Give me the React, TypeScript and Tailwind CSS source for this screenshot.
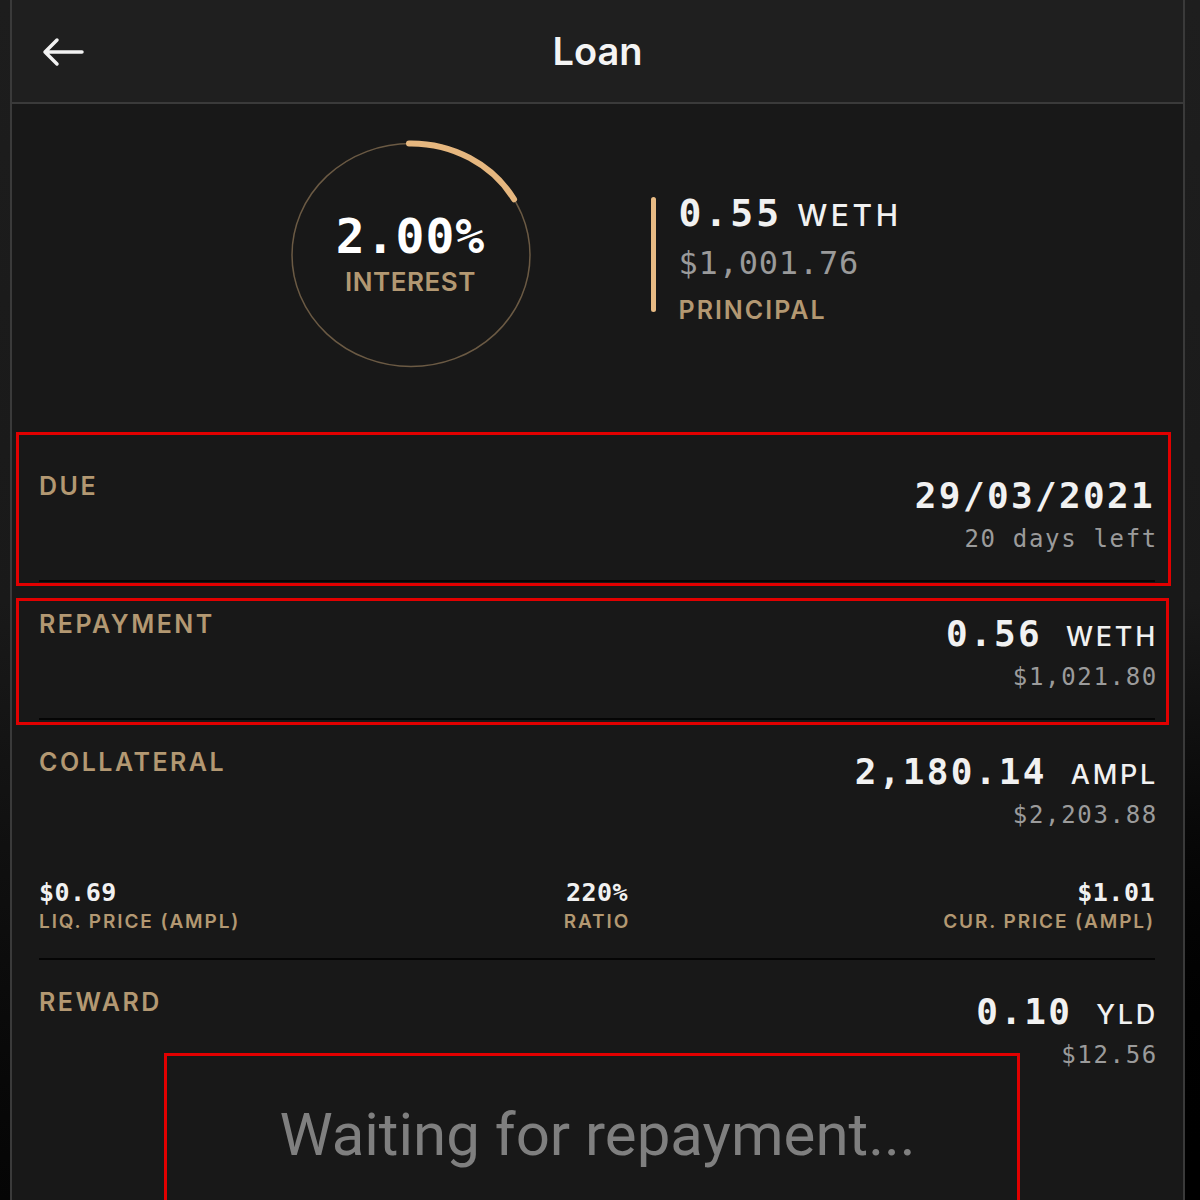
const mono = "font-['DejaVu_Sans_Mono',monospace]";
const sans = "font-['Inter','Noto_Sans',sans-serif]";

const label = `${sans} text-[25px] leading-none font-semibold tracking-[0.1em] text-[#b39872]`;

type Row = {
  title: string;
  value: string;
  unit?: string;
  sub: string;
};

const rows: Row[] = [
  { title: "DUE", value: "29/03/2021", sub: "20 days left" },
  { title: "REPAYMENT", value: "0.56", unit: "WETH", sub: "$1,021.80" },
];

const stats = [
  { value: "$0.69", label: "LIQ. PRICE (AMPL)", align: "items-start" },
  { value: "220%", label: "RATIO", align: "items-center" },
  { value: "$1.01", label: "CUR. PRICE (AMPL)", align: "items-end" },
];

function ValueBlock({ value, unit, sub }: { value: string; unit?: string; sub: string }) {
  return (
    <div className="mt-[4px] flex flex-col items-end">
      <div className="flex items-baseline">
        <span className={`${mono} text-[36px] leading-none font-bold tracking-[0.065em] text-[#f1f1f1]`}>
          {value}
        </span>
        {unit && (
          <span className={`${sans} ml-[24px] -mr-[3px] text-[27px] leading-none font-medium tracking-[0.1em] text-[#f1f1f1]`}>
            {unit}
          </span>
        )}
      </div>
      <span className={`${mono} mt-[13px] -mr-[3px] text-[24px] leading-none tracking-[0.07em] text-[#9b9b9b]`}>
        {sub}
      </span>
    </div>
  );
}

function InterestRing() {
  // ellipse centre 122,116 ; arc runs 60deg clockwise from the top
  const cx = 122;
  const cy = 116;
  const rx = 119;
  const ry = 111.5;
  const endX = cx + rx * Math.cos(Math.PI / 6);
  const endY = cy - ry * Math.sin(Math.PI / 6);
  return (
    <div className="relative h-[232px] w-[244px] shrink-0">
      <svg width="244" height="232" viewBox="0 0 244 232" fill="none">
        <ellipse cx={cx} cy={cy} rx={rx} ry={ry} stroke="#6b5a44" strokeWidth="1.5" />
        <path
          d={`M ${cx - 2} ${cy - ry} A ${rx} ${ry} 0 0 1 ${endX} ${endY}`}
          stroke="#e6b77f"
          strokeWidth="6"
          strokeLinecap="round"
        />
      </svg>
      <div className="absolute inset-0 flex flex-col items-center justify-center pb-[4px]">
        <span className={`${mono} text-[48px] leading-none font-bold tracking-[0.02em] text-white`}>
          2.00%
        </span>
        <span className={`${sans} mt-[9px] text-[26px] leading-none font-semibold tracking-[0.02em] text-[#b39872]`}>
          INTEREST
        </span>
      </div>
    </div>
  );
}

export default function App() {
  return (
    <div className="relative flex h-[1200px] w-[1200px] overflow-hidden bg-black">
      <div className="w-[10px] shrink-0 bg-gradient-to-b from-[#1d1d1d] via-[#191919] to-[#050505]" />

      <div className="flex w-[1175px] shrink-0 flex-col border-x-2 border-[#3a3a3a] bg-[#181818]">
        <header className="grid h-[104px] shrink-0 grid-cols-[1fr_auto_1fr] items-center border-b-2 border-[#3a3a3a] bg-[#1f1f1f] pl-[30px]">
          <svg width="44" height="32" viewBox="0 0 44 32" fill="none" className="mt-[2px]">
            <path
              d="M3 16 H40 M15 4 L3 16 L15 28"
              stroke="#f2f2f2"
              strokeWidth="3.5"
              strokeLinecap="round"
              strokeLinejoin="round"
            />
          </svg>
          <h1 className={`${sans} text-[38px] leading-none font-semibold text-[#f4f4f4] pr-[30px]`}>Loan</h1>
          <div />
        </header>

        <section className="flex h-[340px] shrink-0 items-start justify-center gap-[118px] pt-[35px]">
          <InterestRing />
          <div className="mt-[55px] flex w-[256px] shrink-0">
            <div className="mt-[3px] h-[115px] w-[5px] rounded-full bg-[#e8bb84]" />
            <div className="ml-[23px] flex flex-col">
              <div className="flex items-baseline">
                <span className={`${mono} text-[38px] leading-none font-bold tracking-[0.08em] text-[#f1f1f1]`}>
                  0.55
                </span>
                <span className={`${sans} ml-[15px] text-[30px] leading-none font-medium tracking-[0.12em] text-[#f1f1f1]`}>
                  WETH
                </span>
              </div>
              <span className={`${mono} mt-[15px] text-[32px] leading-none tracking-[0.025em] text-[#9a9a9a]`}>
                $1,001.76
              </span>
              <span className={`${sans} mt-[19px] text-[25px] leading-none font-semibold tracking-[0.08em] text-[#b39872]`}>
                PRINCIPAL
              </span>
            </div>
          </div>
        </section>

        <div className="flex flex-col pl-[27px] pr-[28px]">
          {rows.map((row) => (
            <div key={row.title} className="flex h-[138px] items-start justify-between border-b-2 border-[#050505] pt-[30px]">
              <span className={label}>{row.title}</span>
              <ValueBlock value={row.value} unit={row.unit} sub={row.sub} />
            </div>
          ))}

          <div className="flex flex-col border-b-2 border-[#050505] pt-[30px] pb-[27px]">
            <div className="flex items-start justify-between">
              <span className={label}>COLLATERAL</span>
              <ValueBlock value="2,180.14" unit="AMPL" sub="$2,203.88" />
            </div>
            <div className="mt-[53px] grid grid-cols-3">
              {stats.map((s) => (
                <div key={s.label} className={`flex flex-col ${s.align}`}>
                  <span className={`${mono} text-[25px] leading-none font-bold tracking-[0.02em] text-[#f1f1f1]`}>
                    {s.value}
                  </span>
                  <span className={`${sans} mt-[7px] text-[19px] leading-none font-semibold tracking-[0.1em] text-[#b39872]`}>
                    {s.label}
                  </span>
                </div>
              ))}
            </div>
          </div>

          <div className="flex items-start justify-between pt-[30px]">
            <span className={label}>REWARD</span>
            <ValueBlock value="0.10" unit="YLD" sub="$12.56" />
          </div>
        </div>

        <p className="mt-[38px] text-center font-['Roboto',sans-serif] text-[60px] leading-none text-[#7f7f7f]">
          Waiting for repayment...
        </p>
      </div>

      <div className="flex-1 bg-gradient-to-b from-[#1e1e1e] via-[#1a1a1a] to-[#000]" />

      {/* red annotation frames drawn over the screenshot */}
      <div className="pointer-events-none absolute left-[16px] top-[432px] h-[154px] w-[1155px] border-[3px] border-[#e10000]" />
      <div className="pointer-events-none absolute left-[16px] top-[598px] h-[127px] w-[1153px] border-[3px] border-[#e10000]" />
      <div className="pointer-events-none absolute left-[164px] top-[1053px] h-[160px] w-[856px] border-[3px] border-[#e10000]" />
    </div>
  );
}
